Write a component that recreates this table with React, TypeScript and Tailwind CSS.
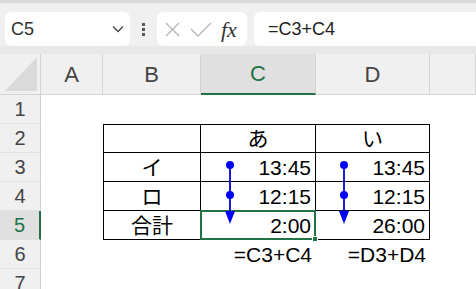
import React from "react";

const FONT = { fontFamily: '"Liberation Sans", "Noto Sans CJK JP", sans-serif' };

const COLS = ["A", "B", "C", "D", ""];

// row -> [B, C, D]
const ROWS: Record<number, string[]> = {
  2: ["", "あ", "い"],
  3: ["イ", "13:45", "13:45"],
  4: ["ロ", "12:15", "12:15"],
  5: ["合計", "2:00", "26:00"],
  6: ["", "=C3+C4", "=D3+D4"],
};

function Cell({ row, col }: { row: number; col: number }) {
  const data = ROWS[row];
  const inTable = row >= 2 && row <= 5 && col >= 1 && col <= 3;
  const text = data && col >= 1 && col <= 3 ? data[col - 1] : "";
  const centered = col === 1 || row === 2;
  const selected = row === 5 && col === 2;

  return (
    <div
      className={`relative flex items-center bg-white text-[21px] leading-none text-black ${
        inTable ? "border-b border-r border-black" : ""
      } ${inTable && col === 1 ? "border-l" : ""} ${inTable && row === 2 ? "border-t" : ""} ${
        centered ? "justify-center" : "justify-end pr-[4px]"
      }`}
    >
      <span className={row === 6 ? "whitespace-nowrap" : ""}>{text}</span>
      {selected && (
        <div className="absolute -inset-px z-10 border-2 border-[#217346]">
          <div className="absolute -bottom-[4px] -right-[4px] h-[6px] w-[6px] border border-white bg-[#217346]" />
        </div>
      )}
    </div>
  );
}

export default function App() {
  const rows = [1, 2, 3, 4, 5, 6, 7];

  return (
    <div className="relative h-[289px] w-[476px] overflow-hidden bg-[#f0f0f0]" style={FONT}>
      {/* Formula bar */}
      <div className="border-t-[3px] border-[#d9d9d9]">
        <div className="flex h-[43px] items-start pt-[9px]">
          <div className="ml-[5px] flex h-[34px] w-[125px] items-center justify-between rounded-md bg-white pl-[6px] pr-[6px]">
            <span className="text-[18px] text-[#333]">C5</span>
            <svg width="12" height="8" viewBox="0 0 12 8">
              <polyline points="1,1.5 6,6.5 11,1.5" fill="none" stroke="#444" strokeWidth="1.3" />
            </svg>
          </div>
          <div className="flex w-[27px] flex-col items-center gap-[2px] pt-[11px]">
            <div className="h-[3px] w-[3px] bg-[#555]" />
            <div className="h-[3px] w-[3px] bg-[#555]" />
            <div className="h-[3px] w-[3px] bg-[#555]" />
          </div>
          <div className="flex h-[34px] w-[90px] items-center gap-[9px] rounded-md bg-white pl-[7px]">
            <svg width="17" height="17" viewBox="0 0 17 17">
              <path d="M2 2L15 15M15 2L2 15" stroke="#b4b4b4" strokeWidth="1.3" fill="none" />
            </svg>
            <svg width="22" height="17" viewBox="0 0 22 17">
              <polyline points="1,8 8,15 21,2" stroke="#b4b4b4" strokeWidth="1.3" fill="none" />
            </svg>
            <span
              className="text-[22px] italic text-[#333]"
              style={{ fontFamily: '"Liberation Serif", serif' }}
            >
              fx
            </span>
          </div>
          <div className="ml-[7px] flex h-[34px] flex-1 items-center rounded-l-md bg-white pl-[14px]">
            <span className="text-[18px] text-[#222]">=C3+C4</span>
          </div>
        </div>
      </div>
      <div className="h-[8px] bg-[#e8e8e8]" />

      {/* Sheet grid */}
      <div className="grid grid-cols-[41px_62px_98px_115px_114px_1fr] grid-rows-[41px_repeat(7,29px)]">
        <div className="flex items-end justify-end border-b border-r border-[#d4d4d4] bg-[#f0f0f0] pb-[3px] pr-[3px]">
          <svg width="32" height="34" viewBox="0 0 32 34">
            <polygon points="0,34 32,0 32,34" fill="#dadada" />
          </svg>
        </div>
        {COLS.map((c, i) => (
          <div
            key={i}
            className={`flex items-center justify-center border-r text-[22px] ${
              i === 2
                ? "border-b-2 border-r-[#d4d4d4] border-b-[#217346] bg-[#e0e0e0] text-[#217346]"
                : "border-b border-[#d4d4d4] bg-[#f0f0f0] text-[#444]"
            }`}
          >
            {c}
          </div>
        ))}

        {rows.map((r) => (
          <React.Fragment key={r}>
            <div
              className={`flex items-center justify-center border-b border-b-[#e2e2e2] text-[20px] leading-none ${
                r === 5
                  ? "border-r-2 border-r-[#217346] bg-[#e0e0e0] text-[#217346]"
                  : "border-r border-r-[#d0d0d0] bg-[#f0f0f0] text-[#444]"
              }`}
            >
              {r}
            </div>
            {[0, 1, 2, 3, 4].map((c) => (
              <Cell key={c} row={r} col={c} />
            ))}
          </React.Fragment>
        ))}
      </div>

      {/* Trace precedents arrows */}
      <svg
        className="pointer-events-none absolute left-0 top-0 z-20"
        width="476"
        height="289"
        viewBox="0 0 476 289"
      >
        {[230, 344].map((x) => (
          <g key={x} fill="#0000ff">
            <line x1={x} y1={165} x2={x} y2={212} stroke="#1a1ad8" strokeWidth="2" />
            <circle cx={x} cy={165} r="4" />
            <circle cx={x} cy={195} r="4" />
            <polygon points={`${x - 5},211 ${x + 5},211 ${x},224`} />
          </g>
        ))}
      </svg>
    </div>
  );
}
